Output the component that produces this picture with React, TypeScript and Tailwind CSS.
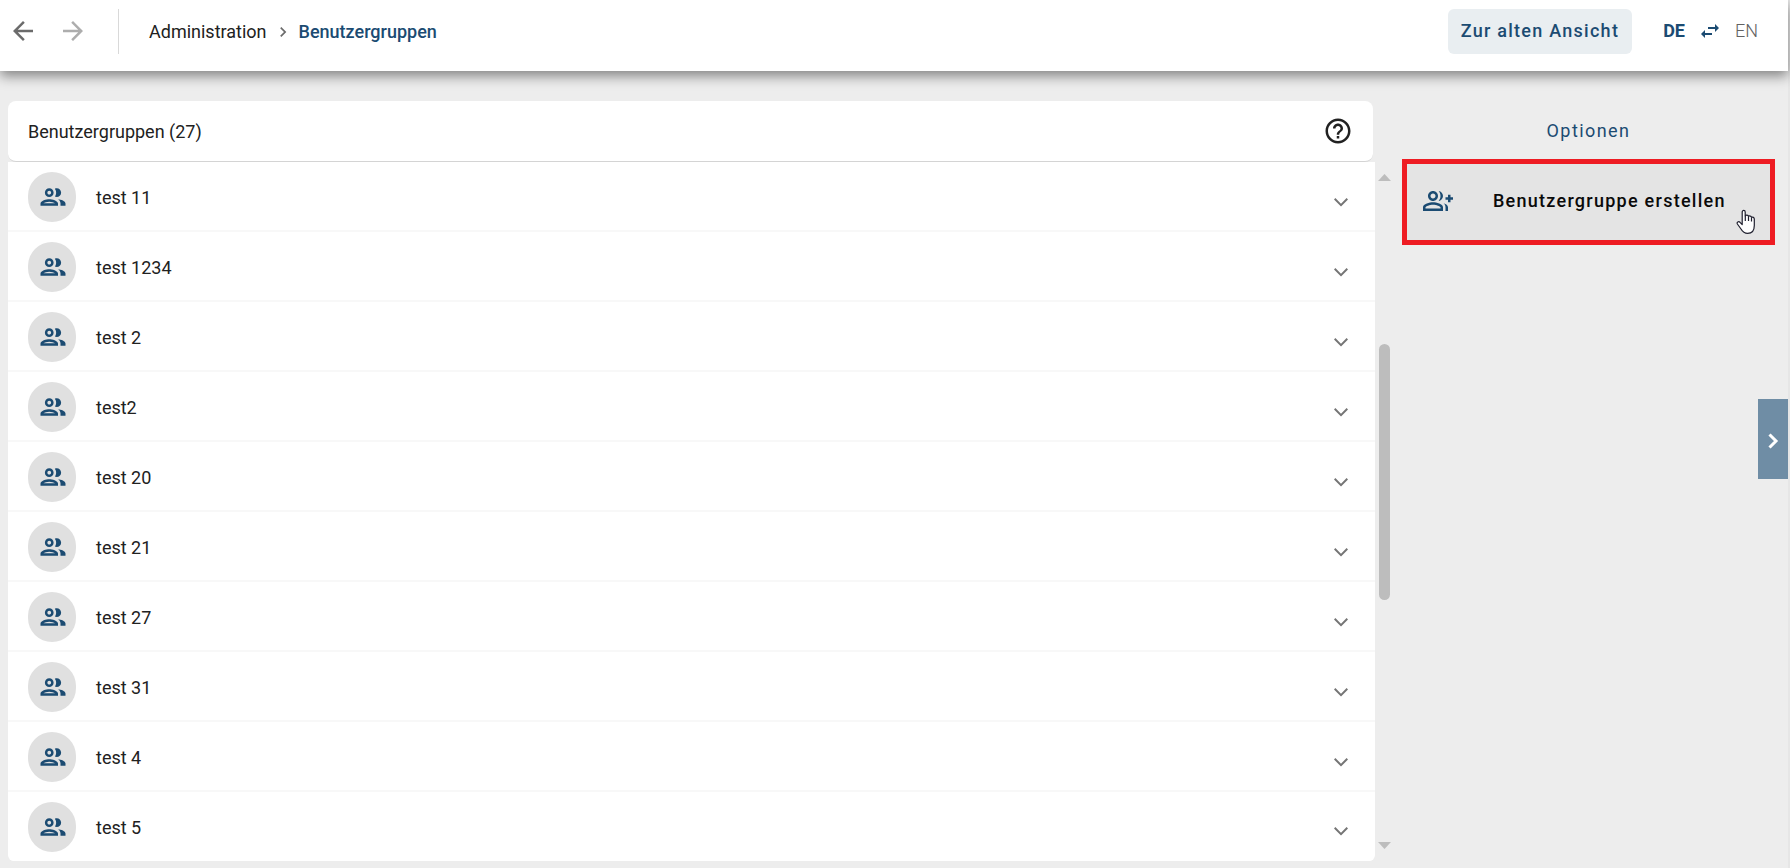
import {
    MdArrowBack,
    MdArrowForward,
    MdChevronRight,
    MdHelpOutline,
    MdOutlineGroup,
    MdOutlineGroupAdd,
    MdSwapHoriz,
} from 'react-icons/md';

const total = 27;

const groups = [
    { id: 1, name: 'test 11' },
    { id: 2, name: 'test 1234' },
    { id: 3, name: 'test 2' },
    { id: 4, name: 'test2' },
    { id: 5, name: 'test 20' },
    { id: 6, name: 'test 21' },
    { id: 7, name: 'test 27' },
    { id: 8, name: 'test 31' },
    { id: 9, name: 'test 4' },
    { id: 10, name: 'test 5' },
]

const Header = () => (
    <header className="relative z-10 flex h-[71px] items-start justify-between bg-white pt-[9px] pr-[30px] pl-2 shadow-[0_5px_12px_rgba(0,0,0,0.45)]">
        <div className="flex h-[45px] items-center">
            <button type="button" aria-label="Zurück" className="pb-0.5 text-[#6b6b6b]">
                <MdArrowBack size={30} />
            </button>
            <button type="button" aria-label="Vorwärts" className="ml-5 pb-0.5 text-[#adadad]">
                <MdArrowForward size={30} />
            </button>
            <nav className="ml-[30px] flex h-full items-center border-l border-[#d9d9d9] pl-[30px] text-lg">
                <a href="#administration" className="text-[#212121]">Administration</a>
                <MdChevronRight size={20} className="mx-[6px] text-[#6b6b6b]" />
                <a href="#benutzergruppen" className="font-medium text-[#1b4b72]">Benutzergruppen</a>
            </nav>
        </div>
        <div className="flex h-[45px] items-center text-lg">
            <button type="button" className="h-full rounded-md bg-[#e9eef1] px-[13px] pb-0.5 font-medium tracking-[0.07em] text-[#1b4b72]">
                Zur alten Ansicht
            </button>
            <button type="button" className="ml-[31px] flex items-center pb-0.5 text-[#1b4b72]">
                <span className="font-bold">DE</span>
                <MdSwapHoriz size={24} className="mx-[13px]" />
                <span className="font-light text-[#616161]">EN</span>
            </button>
        </div>
    </header>
)

const GroupRow = ({ name }: { name: string }) => (
    <li className="flex h-[70px] items-center border-b-2 border-[#f8f8f8] px-5 pt-0.5 last:h-[69px] last:border-white">
        <span className="flex h-[50px] w-12 items-center justify-center rounded-full bg-[#e0e0e0] pl-0.5 text-[#1b4b72]">
            <MdOutlineGroup size={30} />
        </span>
        <span className="ml-5 pt-0.5 text-lg text-[#212121]">{name}</span>
        <button type="button" aria-label={`${name} aufklappen`} className="mt-[10px] mr-[7px] ml-auto">
            <svg width="14" height="9" viewBox="0 0 14 9" fill="none" stroke="#757575" strokeWidth="2">
                <path d="M0.7 0.8L7 7.1L13.3 0.8" />
            </svg>
        </button>
    </li>
)

const Scrollbar = () => (
    <div className="flex w-[18px] flex-col items-center py-3" aria-hidden="true">
        <svg width="13" height="7" viewBox="0 0 13 7" fill="#bdbdbd">
            <path d="M0 7L6.5 0L13 7Z" />
        </svg>
        <div className="mt-[163px] h-64 w-[11px] rounded-full bg-[#bdbdbd]" />
        <svg width="13" height="7" viewBox="0 0 13 7" fill="#bdbdbd" className="mt-auto">
            <path d="M0 0H13L6.5 7Z" />
        </svg>
    </div>
)

const HandCursor = () => (
    <svg
        width="20"
        height="26"
        viewBox="0 0 20 26"
        fill="#ffffff"
        stroke="#1f1f2e"
        strokeWidth="1.2"
        strokeLinejoin="round"
        className="pointer-events-none absolute right-[14px] bottom-[5px]"
        aria-hidden="true"
    >
        <path d="M6.2 15.5V3C6.2 0.9 9.2 0.9 9.2 3V6.8C10 5.8 12.2 6 12.5 7.4C13.4 6.6 15.2 7 15.5 8.3C16.8 7.7 18.3 8.5 18.3 10V16.5C18.3 21.5 15.8 24.4 11.6 24.4C8.4 24.4 6.6 22.8 5 20L1.4 15C0.4 13.2 2.6 12 4 13.3Z" />
        <path d="M9.3 6.8V12M12.5 7.6V12M15.5 8.5V12.5" fill="none" />
    </svg>
)

const Options = () => (
    <aside className="flex w-[373px] flex-col text-lg">
        <h2 className="flex h-[58px] items-center justify-center pt-0.5 font-normal tracking-[0.08em] text-[#1b4b72]">Optionen</h2>
        <div className="relative border-[5px] border-[#ee1c23]">
            <button type="button" className="flex h-[76px] w-full items-center bg-[#e4e4e4] pb-0.5 pl-4 font-medium tracking-[0.07em] text-[#0a0a0a]">
                <MdOutlineGroupAdd size={30} className="text-[#1b4b72]" />
                <span className="ml-10">Benutzergruppe erstellen</span>
            </button>
            <HandCursor />
        </div>
    </aside>
)

export default function App() {
    return (
        <div className="relative min-h-screen border-r-2 border-[#e6e6e6] bg-[#ededed] font-['Roboto',sans-serif]">
            <Header />
            <main className="flex pt-[30px] pr-[13px] pb-[7px] pl-2">
                <section className="min-w-0 flex-1">
                    <div className="mr-[20px] flex h-[61px] items-center justify-between rounded-lg border-b border-[#d4d4d4] bg-white pr-5 pl-5">
                        <h1 className="pt-0.5 text-lg font-normal text-[#212121]">Benutzergruppen ({total})</h1>
                        <button type="button" aria-label="Hilfe" className="text-[#212121]">
                            <MdHelpOutline size={30} />
                        </button>
                    </div>
                    <div className="flex">
                        <ul className="min-w-0 flex-1 overflow-hidden rounded-b-md bg-white">
                            {groups.map((group) => (
                                <GroupRow key={group.id} name={group.name} />
                            ))}
                        </ul>
                        <Scrollbar />
                    </div>
                </section>
                <div className="ml-[9px]">
                    <Options />
                </div>
            </main>
            <button type="button" aria-label="Optionen einklappen" className="absolute top-[399px] right-0 flex h-20 w-[30px] items-center justify-center bg-[#6f8da5] pt-1 text-white">
                <svg width="11" height="16" viewBox="0 0 11 16" fill="none" stroke="currentColor" strokeWidth="3">
                    <path d="M1.5 1.5L8 8L1.5 14.5" />
                </svg>
            </button>
        </div>
    );
}
